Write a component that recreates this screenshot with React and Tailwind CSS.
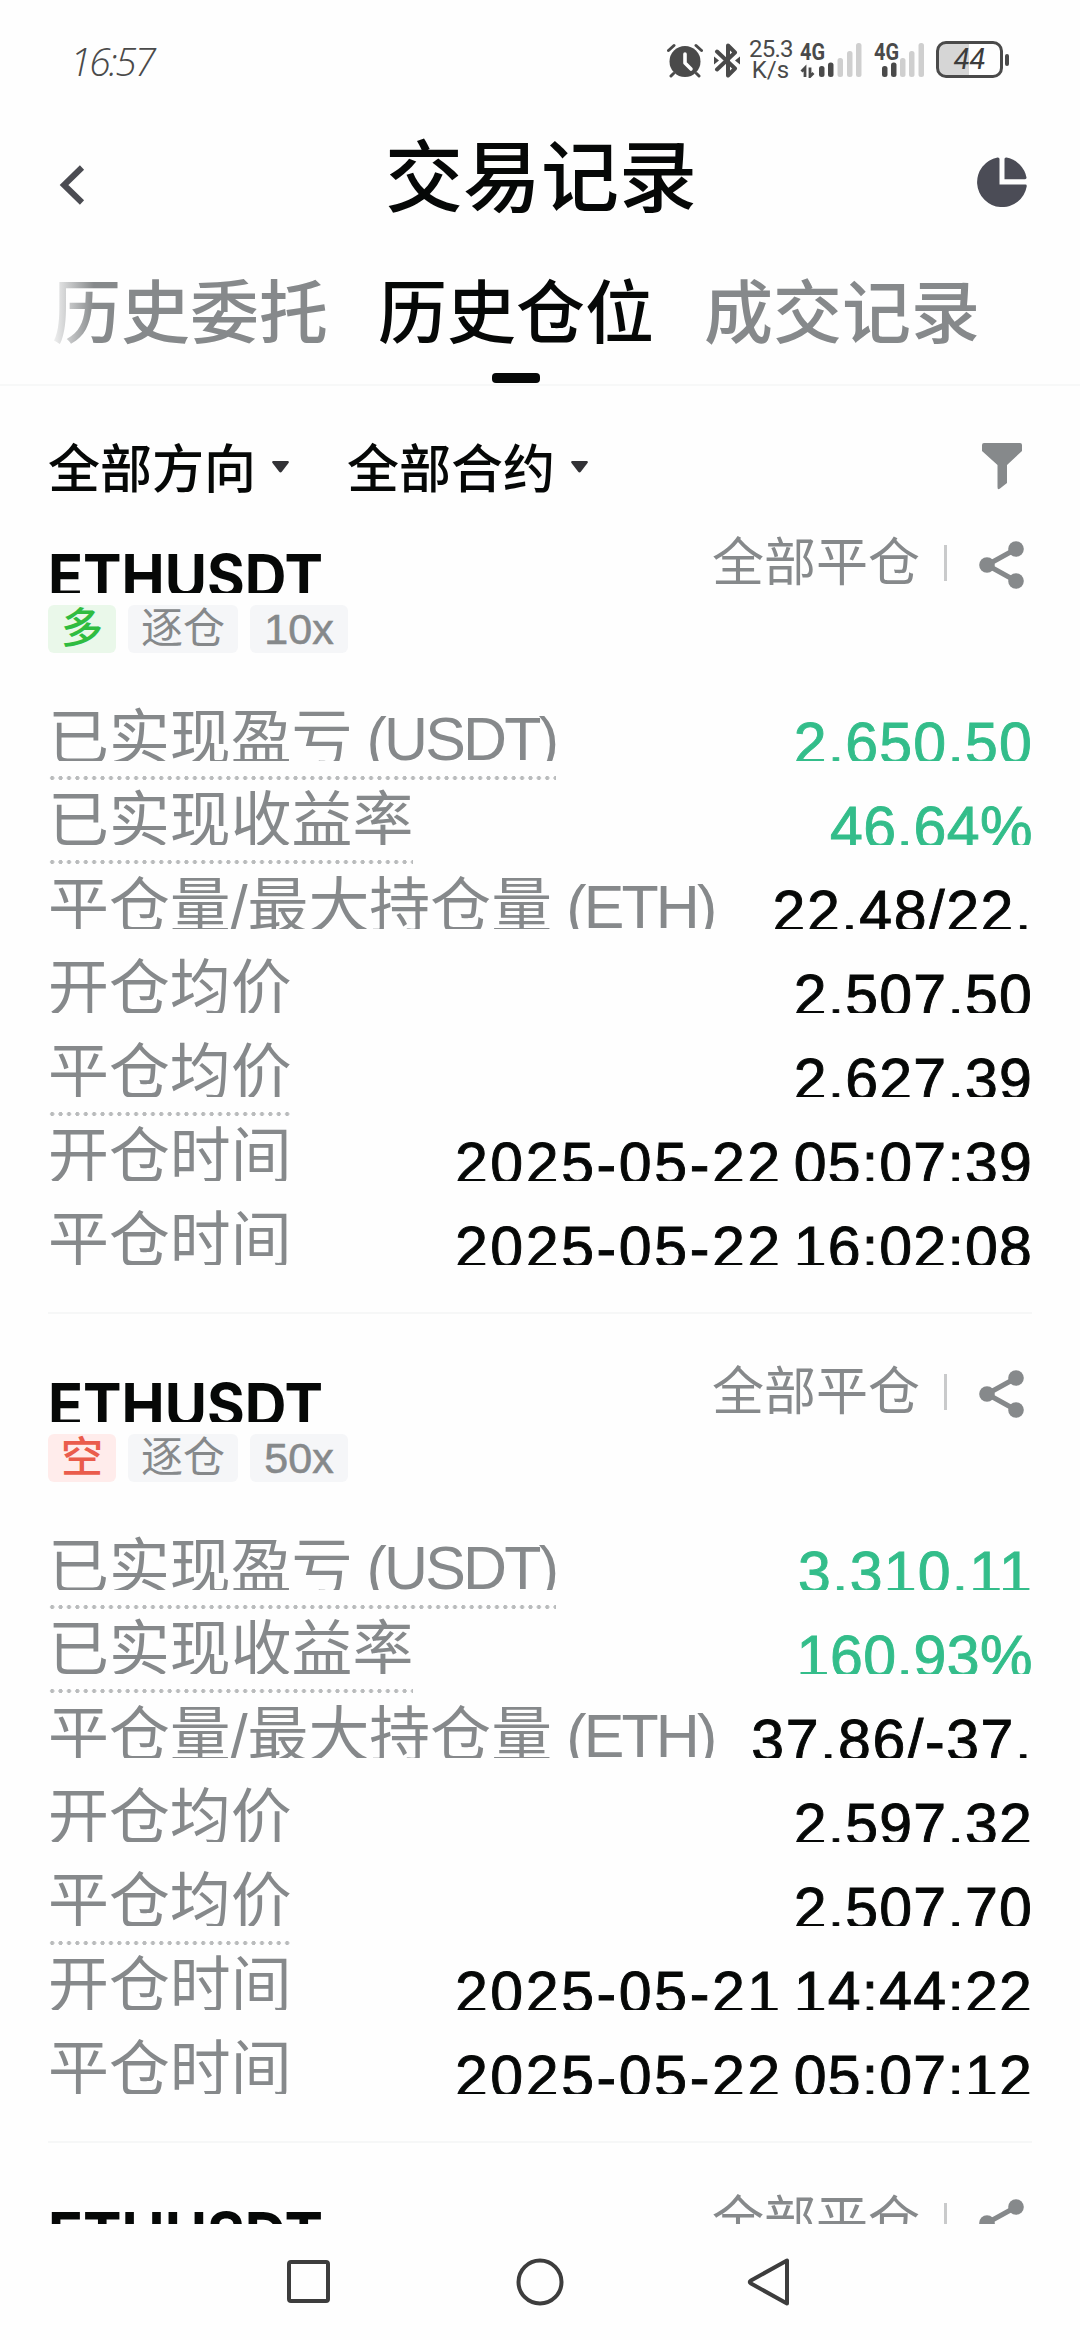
const positions = [
  {
    symbol: 'ETHUSDT',
    side: 'long',
    leverage: '10x',
    rows: [
      { label: '已实现盈亏', unit: '(USDT)', value: '2.650.50', hint: true, profit: true },
      { label: '已实现收益率', value: '46.64%', hint: true, profit: true },
      { label: '平仓量/最大持仓量', unit: '(ETH)', value: '22.48/22.' },
      { label: '开仓均价', value: '2.507.50' },
      { label: '平仓均价', value: '2.627.39', hint: true },
      { label: '开仓时间', date: '2025-05-22', value: '05:07:39' },
      { label: '平仓时间', date: '2025-05-22', value: '16:02:08' },
    ],
  },
  {
    symbol: 'ETHUSDT',
    side: 'short',
    leverage: '50x',
    rows: [
      { label: '已实现盈亏', unit: '(USDT)', value: '3.310.11', hint: true, profit: true },
      { label: '已实现收益率', value: '160.93%', hint: true, profit: true },
      { label: '平仓量/最大持仓量', unit: '(ETH)', value: '37.86/-37.' },
      { label: '开仓均价', value: '2.597.32' },
      { label: '平仓均价', value: '2.507.70', hint: true },
      { label: '开仓时间', date: '2025-05-21', value: '14:44:22' },
      { label: '平仓时间', date: '2025-05-22', value: '05:07:12' },
    ],
  },
  { symbol: 'ETHUSDT', side: 'long', leverage: '10x', rows: [] },
];

const tabs = ['历史委托', '历史仓位', '成交记录'];

const AlarmIcon = () => (
  <svg className="w-9 h-[35px]" viewBox="0 0 36 35" fill="none" stroke="#4a4a4a" strokeLinecap="round">
    <circle cx="18" cy="18.5" r="15.5" fill="#4a4a4a" stroke="none" />
    <path d="M1.5 7.5 7 2.5M34.5 7.5 29 2.5M6.5 30.5 4 33M29.5 30.5 32 33" strokeWidth="3" />
    <path d="M18 11v9l6 6" stroke="#fefefe" strokeWidth="3.6" strokeLinejoin="round" />
  </svg>
);

const BluetoothIcon = () => (
  <svg className="w-[26px] h-[35px]" viewBox="0 0 26 35" fill="none" stroke="#4a4a4a" strokeWidth="4" strokeLinecap="round" strokeLinejoin="round">
    <path d="M3 8.5 21 25.5 14 32.5V2.5L21 9.5 3 26.5" />
    <path d="M0 13.5v8l5-4zM26 13.5v8l-5-4z" fill="#4a4a4a" stroke="none" />
  </svg>
);

// Two of five bars are lit
const Signal = ({ traffic }) => (
  <svg className="w-[62px] h-[35px]" viewBox="0 0 62 35">
    <text x="0" y="16.5" fontFamily="Roboto" fontWeight="700" fontSize="23" fill="#4a4a4a" textLength="25" lengthAdjust="spacingAndGlyphs">4G</text>
    {traffic && (
      <path d="M5 34v-9L1.5 28.5M10 24.5v9L13.5 30" fill="none" stroke="#4a4a4a" strokeWidth="2.8" />
    )}
    <g fill="#4a4a4a">
      <rect x={traffic ? 19 : 8} y="23" width="5.5" height="11" rx="2.5" />
      <rect x={traffic ? 28 : 17} y="19.5" width="5.5" height="14.5" rx="2.5" />
    </g>
    <g fill="#cfcfcf">
      <rect x={traffic ? 37.5 : 26} y="15" width="5.5" height="19" rx="2.5" />
      <rect x={traffic ? 47 : 35} y="8" width="5.5" height="26" rx="2.5" />
      <rect x={traffic ? 56 : 44.5} y="0" width="5.5" height="34" rx="2.5" />
    </g>
  </svg>
);

const Battery = () => (
  <div className="flex items-center gap-[2px] mt-[2px]">
    <div className="w-[67px] h-[37px] rounded-[10px] border-[3px] border-[#4a4a4a] bg-linear-to-r from-[#d6d6d6] from-50% to-[#fefefe] to-50% flex items-center justify-center">
      <span className="font-[Roboto] italic text-[29px] leading-none text-[#3c3c3c]">44</span>
    </div>
    <div className="w-[4px] h-3 rounded-[2px] bg-[#4a4a4a]" />
  </div>
);

const StatusBar = () => (
  <div className="h-28 pl-[70px] pr-[71px] flex items-start justify-between text-[#4a4a4a]">
    <span className="mt-[41px] font-['Open_Sans'] font-light italic text-[39px] leading-[40px] tracking-[-2.2px]">16:57</span>
    <div className="mt-[39px] flex items-start">
      <div className="mt-1"><AlarmIcon /></div>
      <div className="mt-1 ml-[11px]"><BluetoothIcon /></div>
      <div className="ml-[9px] w-[43px] font-[Roboto] text-[24px] leading-[21px] text-center">
        <div className="tracking-[-0.8px]">25.3</div>
        <div>K/s</div>
      </div>
      <div className="mt-1 ml-2"><Signal traffic /></div>
      <div className="mt-1 ml-3"><Signal /></div>
      <Battery />
    </div>
  </div>
);

const Header = () => (
  <header className="h-[134px] pl-[59px] pr-[53px] flex items-center justify-between">
    <svg className="w-[26px] h-10 mt-3" viewBox="0 0 26 40" fill="none" stroke="#4b4c52" strokeWidth="6">
      <path d="M23 2.5 5 20 23 37.5" />
    </svg>
    <h1 className="ml-5 text-[78px] leading-none font-medium text-[#060807]">交易记录</h1>
    <svg className="w-[50px] h-[50px] mt-[6px]" viewBox="0 0 50 50" fill="#4b4c56">
      <path d="M20.5 0.5Q22.5 0.3 22.5 2V27.5H48.5Q50 27.5 49.7 29.5A25 25 0 1 1 20.5 0.5Z" />
      <path d="M27.5 2Q27.5 0.2 29.5 0.5A25 25 0 0 1 49.5 20.5Q49.7 22.3 48 22.3H27.5Z" />
    </svg>
  </header>
);

const Tabs = () => (
  <nav className="relative h-[140px] pl-[52px] flex gap-[50px] border-b-2 border-[#f7f8f8]">
    {tabs.map((tab, i) => (
      <div key={tab} className="flex flex-col items-center">
        <span className={`h-[127px] text-[69px] leading-[137px] font-medium whitespace-nowrap ${i === 1 ? 'text-[#060807]' : 'text-[#86898b]'}`}>
          {tab}
        </span>
        {i === 1 && <span className="w-12 h-[10px] rounded-[4px] bg-[#060807]" />}
      </div>
    ))}
    <div className="absolute left-12 top-0 w-[46px] h-[130px] bg-linear-to-r from-[#fefefe] to-transparent" />
  </nav>
);

const Caret = () => (
  <svg className="w-[17px] h-3 mt-[17px]" viewBox="0 0 17 12" fill="#323236">
    <path d="M1 0H16Q17.5 0.5 16.5 2L10 10.5Q8.5 12.3 7 10.5L0.5 2Q-0.5 0.5 1 0Z" />
  </svg>
);

const Filters = () => (
  <div className="h-[147px] pt-[58px] pl-12 pr-[58px] flex items-start text-[52px] leading-[52px] font-medium text-[#060807]">
    <span>全部方向</span>
    <div className="ml-4"><Caret /></div>
    <span className="ml-[58px]">全部合约</span>
    <div className="ml-4"><Caret /></div>
    <svg className="w-10 h-[47px] ml-auto mt-[-1px]" viewBox="0 0 40 47" fill="#86898b">
      <path d="M2 0H38Q40 0 40 2V8L25 22V40L18 45.5Q15.5 47.5 15.5 44V22L0 8V2Q0 0 2 0Z" />
    </svg>
  </div>
);

const ShareIcon = () => (
  <svg className="w-[45px] h-12" viewBox="0 0 45 48" fill="#86898b">
    <path d="M37 8 8 24 37 40" fill="none" stroke="#86898b" strokeWidth="5" />
    <circle cx="37" cy="8" r="7.8" />
    <circle cx="8" cy="24" r="7.8" />
    <circle cx="37" cy="40" r="7.8" />
  </svg>
);

const valueTracking = (value) => {
  if (value.endsWith('%')) return 'tracking-[0.5px]';
  if (value.includes('/')) return 'tracking-[1.6px]';
  return 'tracking-[1.2px]';
};

const Row = ({ label, unit, date, value, hint, profit }) => (
  <div className="h-[84px] flex justify-between">
    <div className="text-[#86898b]">
      <div className={`h-[60px] overflow-hidden whitespace-nowrap text-[60.9px] ${unit ? 'leading-[77px]' : 'leading-[72px]'}`}>
        {label}
        {unit && <span className="tracking-[-2.8px]"> {unit}</span>}
      </div>
      {hint && (
        <div className="mt-[15px] h-1 bg-[radial-gradient(circle,#b9bbbc_1.8px,transparent_2.3px)] bg-[length:8.4px_4px]" />
      )}
    </div>
    <div className={`h-[60px] -mr-px flex overflow-hidden whitespace-nowrap text-[59px] leading-[87px] [-webkit-text-stroke:0.9px_currentColor] ${profit ? 'text-[#33bd8a]' : 'text-[#060807]'}`}>
      {date && <span className="mr-[11px] tracking-[2.6px]">{date}</span>}
      <span className={valueTracking(value)}>{value}</span>
    </div>
  </div>
);

const PositionCard = ({ symbol, side, leverage, rows }) => (
  <section className="pb-[23px] border-b-2 border-[#f6f7f7]">
    <div className="flex justify-between">
      <div className="h-[60px] overflow-hidden">
        <div className="origin-left scale-x-[0.962] font-[Inter] font-bold text-[60px] leading-[86px] text-[#060807]">{symbol}</div>
      </div>
      <div className="h-[60px] pr-2 flex items-start text-[52px] leading-[60px] text-[#86898b]">
        <span>全部平仓</span>
        <span className="mt-3 ml-6 w-[3px] h-9 bg-[#c9cacb]" />
        <div className="mt-2 ml-8"><ShareIcon /></div>
      </div>
    </div>
    <div className="mt-3 flex gap-3 text-[42px] leading-[47px] text-[#86898b]">
      {side === 'long' ? (
        <span className="w-[68px] h-12 rounded-[6px] text-center font-medium bg-[#eaf8ea] text-[#2fbc40]">多</span>
      ) : (
        <span className="w-[68px] h-12 rounded-[6px] text-center font-medium bg-[#ffeceb] text-[#ea5c4c]">空</span>
      )}
      <span className="w-[110px] h-12 rounded-[6px] text-center bg-[#f5f6f8]">逐仓</span>
      <span className="w-[98px] h-12 rounded-[6px] text-center text-[43px] leading-[49px] [-webkit-text-stroke:0.6px_currentColor] bg-[#f5f6f8]">{leverage}</span>
    </div>
    <div className="mt-12">
      {rows.map((row) => (
        <Row key={row.label} {...row} />
      ))}
    </div>
  </section>
);

const NavBar = () => (
  <div className="h-[116px] pt-[34px] pl-[285px]">
    <svg className="w-[506px] h-12" viewBox="0 0 506 48" fill="none" stroke="#3d3d3d" strokeWidth="4" strokeLinejoin="round">
      <rect x="4" y="4" width="39" height="39" rx="2" />
      <circle cx="255" cy="24" r="21.5" />
      <path d="M502 2.5V45.5L466 25.5Q463.5 24 466 22.5Z" />
    </svg>
  </div>
);

function App() {
  return (
    <div className="w-[1080px] h-[2340px] overflow-hidden bg-[#fefefe] flex flex-col font-['Liberation_Sans','Noto_Sans_CJK_SC',sans-serif]">
      <StatusBar />
      <Header />
      <Tabs />
      <Filters />
      <main className="h-[1691px] overflow-hidden px-12 flex flex-col gap-12">
        {positions.map((position, i) => (
          <PositionCard key={i} {...position} />
        ))}
      </main>
      <NavBar />
    </div>
  );
}

export default App;
